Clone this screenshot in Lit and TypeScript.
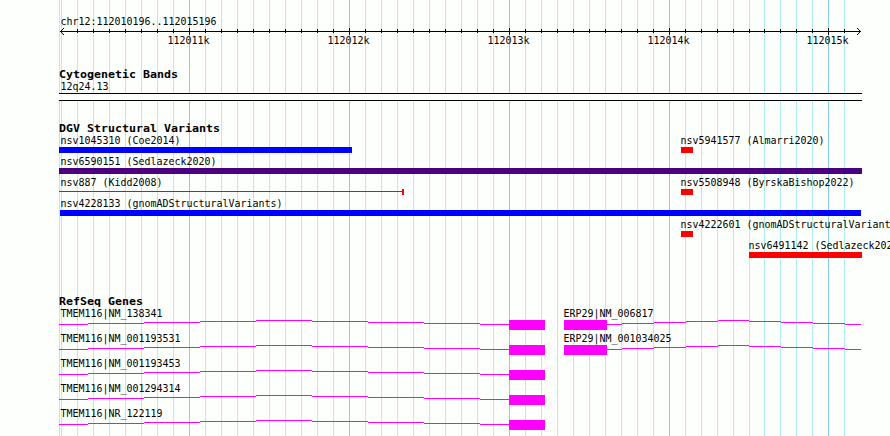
import { LitElement, css, html, svg } from "lit";
import { customElement } from "lit/decorators.js";

interface Feature {
  label: string;
  x: number;
  end: number;
  kind?: "bar" | "line";
  color: string;
}
interface Gene {
  label: string;
  labelX: number;
  exon: [number, number];
  intron: number[];
}

const MAJOR: [number, string][] = [
  [189, "112011k"], [349, "112012k"], [509, "112013k"], [669, "112014k"], [828, "112015k"],
];
const MINOR: number[] = [];
for (let x = 77; x <= 749; x += 16) MINOR.push(x);
MINOR.push(764, 780, 796, 812, 844);
const isMajor = (x: number) => MAJOR.some((m) => m[0] === x);

const RED = "#ff0000";
const BLUE = "#0000ff";
const VARIANTS: Feature[][] = [
  [
    { label: "nsv1045310 (Coe2014)", x: 59, end: 352, color: BLUE },
    { label: "nsv5941577 (Almarri2020)", x: 681, end: 693, color: RED },
  ],
  [{ label: "nsv6590151 (Sedlazeck2020)", x: 59, end: 862, color: "#4b0082" }],
  [
    { label: "nsv887 (Kidd2008)", x: 59, end: 404, kind: "line", color: RED },
    { label: "nsv5508948 (ByrskaBishop2022)", x: 681, end: 693, color: RED },
  ],
  [{ label: "nsv4228133 (gnomADStructuralVariants)", x: 60, end: 861, color: BLUE }],
  [{ label: "nsv4222601 (gnomADStructuralVariants)", x: 681, end: 693, color: RED }],
  [{ label: "nsv6491142 (Sedlazeck2020)", x: 749, end: 862, color: RED }],
];

const tmem = (id: string): Gene => ({
  label: `TMEM116|${id}`, labelX: 60, exon: [509, 545],
  intron: [59, 88, 144, 200, 256, 312, 368, 424, 480, 509],
});
const erp = (id: string): Gene => ({
  label: `ERP29|${id}`, labelX: 563, exon: [564, 607],
  intron: [607, 622, 654, 686, 718, 749, 781, 813, 845, 861],
});
const GENES: Gene[][] = [
  [tmem("NM_138341"), erp("NM_006817")],
  [tmem("NM_001193531"), erp("NM_001034025")],
  [tmem("NM_001193453")],
  [tmem("NM_001294314")],
  [tmem("NR_122119")],
];

const label = (x: number, y: number, s: string) =>
  svg`<text class="label" x=${x + 0.5} y=${y} textLength=${s.length * 6} lengthAdjust="spacingAndGlyphs">${s}</text>`;
const title = (y: number, s: string) =>
  svg`<text class="title" x="59" y=${y} textLength=${s.length * 7} lengthAdjust="spacingAndGlyphs">${s}</text>`;
const rect = (x: number, y: number, w: number, h: number, fill = "#000") =>
  svg`<rect x=${x} y=${y} width=${w} height=${h} fill=${fill}></rect>`;

@customElement("app-root")
export class AppRoot extends LitElement {
  static styles = css`
    :host {
      display: block;
      position: relative;
      width: 890px;
      height: 436px;
      overflow: hidden;
      background: #fcfffc;
    }
    svg { display: block; width: 890px; flex: none; shape-rendering: crispEdges; }
    .grid { position: absolute; inset: 0; height: 436px; }
    .tracks { position: relative; display: flex; flex-direction: column; }
    .ruler { height: 66px; }
    .bands { height: 54px; }
    .heading { height: 15px; }
    .heading.tight { height: 12px; overflow: visible; }
    .variant { height: 21px; }
    .spacer { height: 32px; }
    .gene { height: 25px; }
    .label, .title {
      font-family: "DejaVu Sans Mono", "Liberation Mono", monospace;
      font-size: 10.6px;
      fill: #000;
      white-space: pre;
    }
    .title { font-weight: 700; font-size: 11px; }
  `;

  private grid() {
    return html`<svg class="grid" viewBox="0 0 890 436">
      ${rect(59, 0, 1, 436, "#afeeee")}${rect(61, 0, 1, 436, "#afeeee")}
      ${MINOR.filter((x) => !isMajor(x)).map((x) => rect(x, 0, 1, 436, "#afeeee"))}
      ${MAJOR.map(([x]) => rect(x, 0, 1, 436, "#87ceeb"))}
    </svg>`;
  }

  private ruler() {
    return html`<svg class="ruler" viewBox="0 0 890 66">
      ${label(60, 25, "chr12:112010196..112015196")}
      ${rect(60, 31, 801, 1)}
      ${[1, 2, 3].map((d) => [
        rect(60 + d, 31 - d, 1, 1), rect(60 + d, 31 + d, 1, 1),
        rect(860 - d, 31 - d, 1, 1), rect(860 - d, 31 + d, 1, 1),
      ])}
      ${MINOR.filter((x) => !isMajor(x)).map((x) => rect(x, 29, 1, 4))}
      ${MAJOR.map(([x, s]) => [rect(x, 28, 1, 7), label(x - 22, 44, s)])}
    </svg>`;
  }

  private bands() {
    return html`<svg class="bands" viewBox="0 0 890 54">
      ${title(12, "Cytogenetic Bands")} ${label(60, 24, "12q24.13")}
      ${rect(59, 27, 803, 8, "#fff")}${rect(59, 27, 803, 1)}${rect(59, 34, 803, 1)}
    </svg>`;
  }

  private variant(row: Feature[]) {
    return html`<svg class="variant" viewBox="0 0 890 21">
      ${row.map((f) => [
        label(f.x > 60 ? f.x - 1 : 60, 9, f.label),
        f.kind === "line"
          ? [rect(f.x, 14, f.end - f.x, 1, f.color), rect(f.end - 2, 12, 2, 6, f.color)]
          : rect(f.x, 12, f.end - f.x, 6, f.color),
      ])}
    </svg>`;
  }

  private gene(row: Gene[]) {
    return html`<svg class="gene" viewBox="0 0 890 25">
      ${row.map((g) => [
        label(g.labelX, 12, g.label),
        rect(g.exon[0], 15, g.exon[1] - g.exon[0], 10, "#ff00ff"),
        g.intron.slice(0, -1).map((x, i) =>
          rect(x, 15 + Math.abs(i - 4), g.intron[i + 1] - x, 1, "#ff00ff")),
      ])}
    </svg>`;
  }

  render() {
    return html`${this.grid()}
      <div class="tracks">
        ${this.ruler()} ${this.bands()}
        <svg class="heading" viewBox="0 0 890 15">${title(12, "DGV Structural Variants")}</svg>
        ${VARIANTS.map((r) => this.variant(r))}
        <div class="spacer"></div>
        <svg class="heading tight" viewBox="0 0 890 12">${title(12, "RefSeq Genes")}</svg>
        <div class="genes">${GENES.map((r) => this.gene(r))}</div>
      </div>`;
  }
}
